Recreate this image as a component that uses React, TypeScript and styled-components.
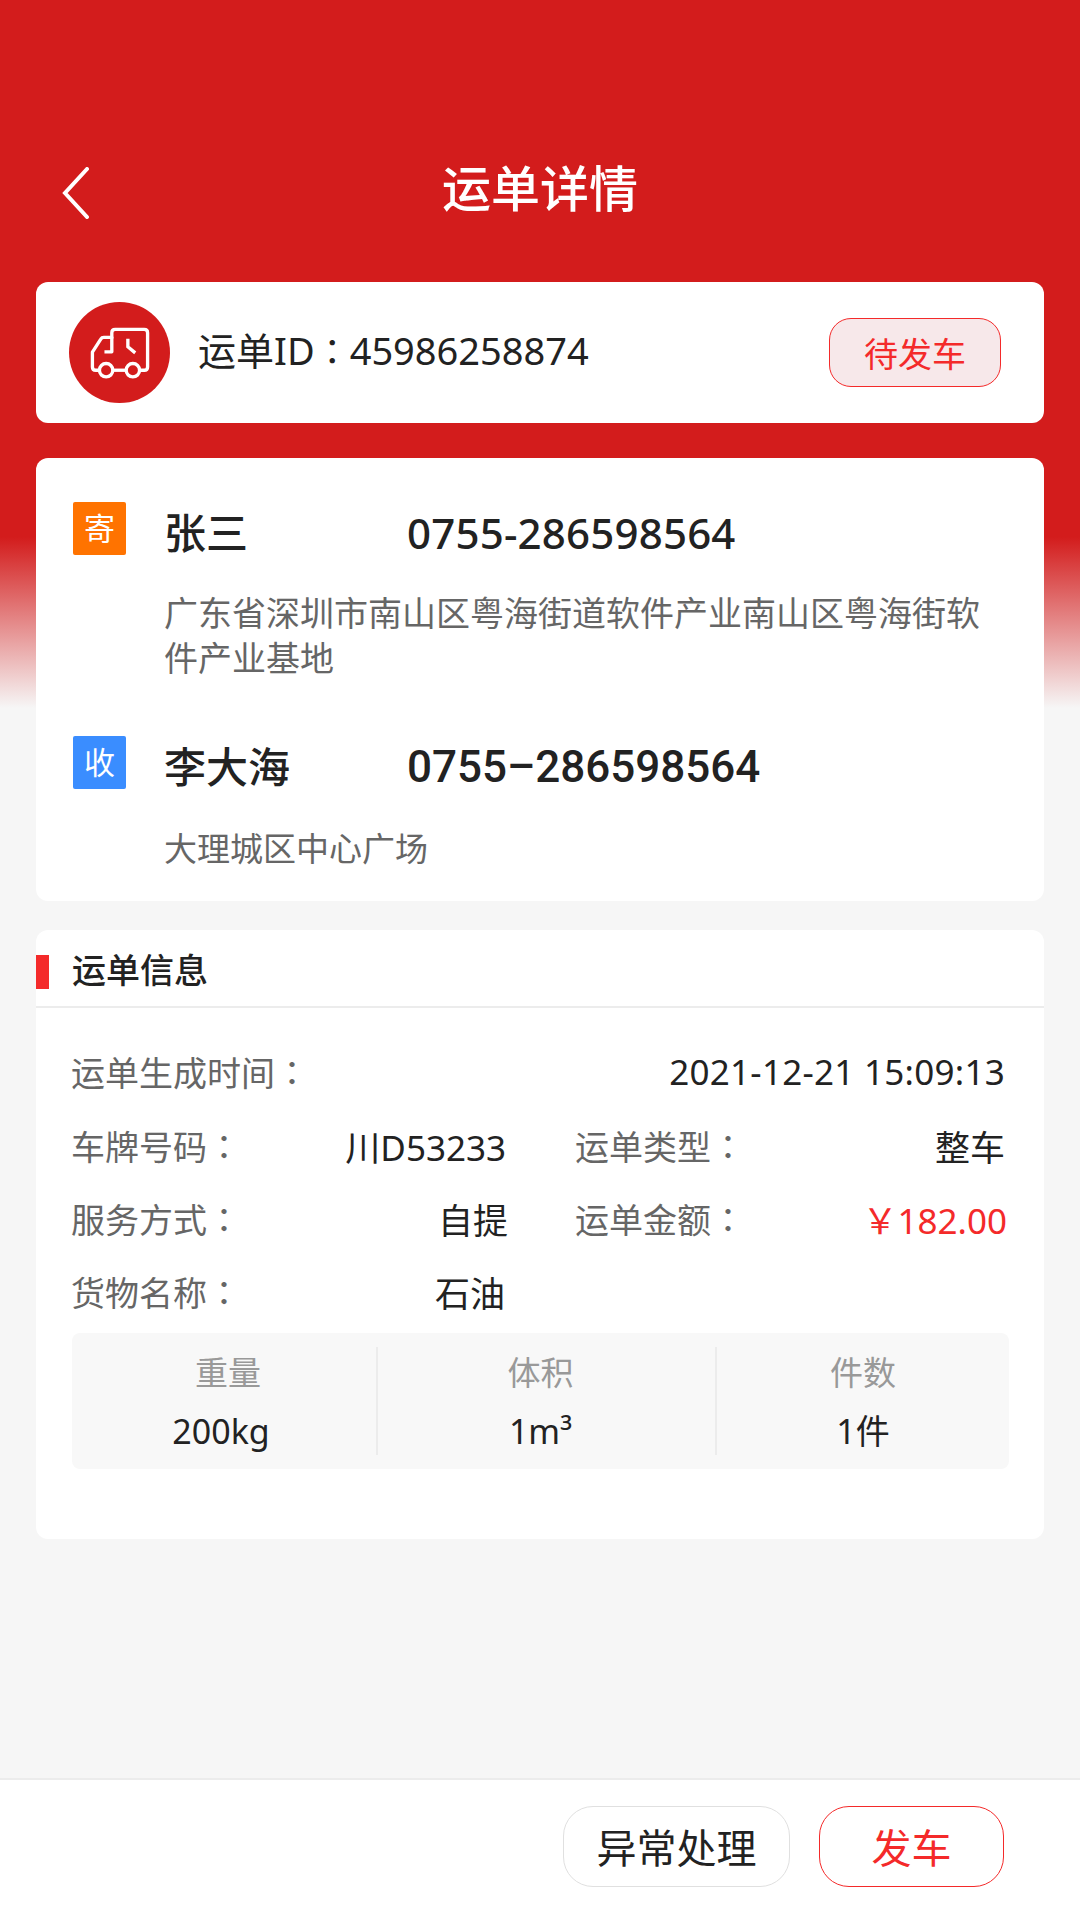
import React from "react";
import styled, { createGlobalStyle } from "styled-components";

const RED = "#d31c1c";
const ACCENT = "#f42a2a";

const GlobalStyle = createGlobalStyle`
  html, body {
    margin: 0;
    padding: 0;
    background: #f6f6f6;
    font-family: "Noto Sans", "Noto Sans CJK SC", sans-serif;
  }
  * {
    box-sizing: border-box;
  }
`;

const Page = styled.div`
  width: 1080px;
  height: 1920px;
  display: flex;
  flex-direction: column;
  background-color: #f6f6f6;
  background-image: linear-gradient(${RED} 0, ${RED} 537px, #f6f6f6 708px);
  background-size: 100% 708px;
  background-repeat: no-repeat;
`;

const NavBar = styled.div`
  display: grid;
  grid-template-columns: 1fr auto 1fr;
  align-items: center;
  height: 120px;
  margin-top: 130px;
  margin-bottom: 32px;
  color: #fff;
`;

const BackIcon = styled.svg`
  display: block;
  margin: 6px 0 0 62px;
`;

const Title = styled.div`
  margin-top: -5px;
  font-size: 49px;
  font-weight: 500;
  line-height: 60px;
`;

const Card = styled.div<{ $h: number; $mb: number }>`
  margin: 0 36px ${(p) => p.$mb}px;
  height: ${(p) => p.$h}px;
  background: #fff;
  border-radius: 12px;
`;

const OrderRow = styled(Card)`
  display: flex;
  align-items: center;
  padding: 0 43px 0 33px;
`;

const Avatar = styled.div`
  width: 101px;
  height: 101px;
  border-radius: 50%;
  background: ${RED};
  flex-shrink: 0;
`;

const OrderId = styled.div`
  flex: 1;
  margin: -5px 0 0 28px;
  font-size: 38px;
  line-height: 48px;
  color: #222;
`;

const Colon = styled.span`
  font-family: "Noto Sans CJK TC", sans-serif;
`;

const OrderColon = styled(Colon)`
  font-size: 35px;
`;

const StatusBadge = styled.div`
  width: 172px;
  height: 69px;
  display: flex;
  align-items: center;
  justify-content: center;
  background: #f7e8ea;
  border: 1px solid ${ACCENT};
  border-radius: 22px;
  font-size: 34px;
  color: ${ACCENT};
`;

const Contacts = styled(Card)`
  padding: 44px 36px 0 37px;
`;

const ContactHead = styled.div<{ $mt?: number }>`
  display: flex;
  align-items: flex-start;
  margin-top: ${(p) => p.$mt ?? 0}px;
`;

const Tag = styled.div<{ $color: string }>`
  width: 53px;
  height: 53px;
  flex-shrink: 0;
  display: flex;
  align-items: center;
  justify-content: center;
  padding-bottom: 4px;
  background: ${(p) => p.$color};
  border-radius: 2px;
  font-size: 31px;
  color: #fff;
`;

const ContactName = styled.div`
  width: 243px;
  margin: 2px 0 0 38px;
  font-size: 42px;
  font-weight: 500;
  line-height: 58px;
  color: #222;
`;

const Phone = styled.div<{ $alt?: boolean }>`
  margin-top: 2px;
  font-family: ${(p) => (p.$alt ? `"Roboto"` : `"Noto Sans"`)}, sans-serif;
  font-size: ${(p) => (p.$alt ? 44 : 42)}px;
  font-weight: 500;
  line-height: 58px;
  letter-spacing: ${(p) => (p.$alt ? 0 : 0.2)}px;
  color: #222;
`;

const Address = styled.div<{ $mt: number; $size: number }>`
  margin: ${(p) => p.$mt}px 0 0 91px;
  width: 830px;
  font-size: ${(p) => p.$size}px;
  line-height: 45px;
  color: #666;
`;

const InfoCard = styled(Card)`
  padding-top: 25px;
`;

const SectionHead = styled.div`
  display: flex;
  align-items: center;
  height: 51px;
  border-bottom: 2px solid #ececec;
  box-sizing: content-box;
`;

const AccentBar = styled.div`
  width: 13px;
  height: 34px;
  margin-top: -17px;
  background: ${ACCENT};
`;

const SectionTitle = styled.div`
  margin: -22px 0 0 23px;
  font-size: 34px;
  font-weight: 500;
  line-height: 40px;
  color: #222;
`;

const InfoGrid = styled.div`
  display: grid;
  grid-template-columns: 434px 430px;
  column-gap: 70px;
  grid-auto-rows: 73.4px;
  margin: 27px 0 0 35px;
`;

const Field = styled.div<{ $wide?: boolean }>`
  ${(p) => (p.$wide ? "grid-column: 1 / -1;" : "")}
  display: flex;
  justify-content: space-between;
  align-items: center;
`;

const FieldLabel = styled.span`
  font-size: 34px;
  color: #666;
`;

const FieldValue = styled.span<{ $red?: boolean; $shift?: number; $spread?: number }>`
  margin-right: ${(p) => -(p.$shift ?? 0)}px;
  letter-spacing: ${(p) => p.$spread ?? 0}px;
  font-size: 35px;
  color: ${(p) => (p.$red ? ACCENT : "#222")};
`;

const Stats = styled.div`
  display: flex;
  align-items: center;
  height: 136px;
  margin: 4px 35px 0 36px;
  background: #f8f8f8;
  border-radius: 8px;
`;

const StatCell = styled.div<{ $w: number; $pr?: number; $line?: boolean }>`
  width: ${(p) => p.$w}px;
  height: 108px;
  padding-right: ${(p) => p.$pr ?? 0}px;
  display: flex;
  flex-direction: column;
  align-items: center;
  border-right: ${(p) => (p.$line ? "2px solid #ececec" : "none")};
`;

const StatLabel = styled.div<{ $ml?: number }>`
  margin: 1px 0 0 ${(p) => p.$ml ?? 0}px;
  font-size: 33px;
  line-height: 50px;
  color: #999;
`;

const StatValue = styled.div<{ $ml?: number }>`
  margin: 8px 0 0 ${(p) => p.$ml ?? 0}px;
  font-size: 34px;
  line-height: 50px;
  color: #222;
`;

const Footer = styled.div`
  margin-top: auto;
  height: 142px;
  display: flex;
  justify-content: flex-end;
  gap: 29px;
  padding: 26px 76px 0 0;
  background: #fff;
  border-top: 2px solid #ececec;
`;

const ActionButton = styled.div<{ $primary?: boolean }>`
  width: ${(p) => (p.$primary ? 185 : 227)}px;
  height: 81px;
  display: flex;
  align-items: center;
  justify-content: center;
  padding-bottom: 2px;
  border: 1px solid ${(p) => (p.$primary ? ACCENT : "#e0e0e0")};
  border-radius: 30px;
  font-size: 40px;
  color: ${(p) => (p.$primary ? ACCENT : "#222")};
`;

const TruckIcon = () => (
  <svg width="101" height="101" viewBox="87 36 302 302" fill="none" stroke="#fff" strokeWidth="10">
    <path d="M215 145V128Q215 118 225 118H312Q322 118 322 128V230Q322 240 312 240H300" strokeLinejoin="round" />
    <path d="M176 240H167Q157 240 157 230V186L182 147Q185 142 191 142H215V185H193" strokeLinejoin="round" />
    <path d="M219 240H257" />
    <circle cx="198" cy="240" r="20" />
    <circle cx="278" cy="240" r="20" />
    <path d="M263 146V170L285 188" />
  </svg>
);

export default function App() {
  return (
    <Page>
      <GlobalStyle />
      <NavBar>
        <BackIcon width="27" height="52" viewBox="0 0 27 52" fill="none" stroke="#fff" strokeWidth="4" strokeLinecap="round">
          <path d="M25 2L3 26L25 50" />
        </BackIcon>
        <Title>运单详情</Title>
        <div />
      </NavBar>

      <OrderRow $h={141} $mb={35}>
        <Avatar>
          <TruckIcon />
        </Avatar>
        <OrderId>
          运单ID<OrderColon>：</OrderColon>45986258874
        </OrderId>
        <StatusBadge>待发车</StatusBadge>
      </OrderRow>

      <Contacts $h={443} $mb={29}>
        <ContactHead>
          <Tag $color="#ff7300">寄</Tag>
          <ContactName>张三</ContactName>
          <Phone>0755-286598564</Phone>
        </ContactHead>
        <Address $mt={29} $size={34}>
          广东省深圳市南山区粤海街道软件产业南山区粤海街软件产业基地
        </Address>
        <ContactHead $mt={55}>
          <Tag $color="#3a8dff">收</Tag>
          <ContactName>李大海</ContactName>
          <Phone $alt>0755–286598564</Phone>
        </ContactHead>
        <Address $mt={30} $size={33}>
          大理城区中心广场
        </Address>
      </Contacts>

      <InfoCard $h={609} $mb={0}>
        <SectionHead>
          <AccentBar />
          <SectionTitle>运单信息</SectionTitle>
        </SectionHead>
        <InfoGrid>
          <Field $wide>
            <FieldLabel>运单生成时间<Colon>：</Colon></FieldLabel>
            <FieldValue $spread={0.27}>2021-12-21 15:09:13</FieldValue>
          </Field>
          <Field>
            <FieldLabel>车牌号码<Colon>：</Colon></FieldLabel>
            <FieldValue $shift={1}>川D53233</FieldValue>
          </Field>
          <Field>
            <FieldLabel>运单类型<Colon>：</Colon></FieldLabel>
            <FieldValue>整车</FieldValue>
          </Field>
          <Field>
            <FieldLabel>服务方式<Colon>：</Colon></FieldLabel>
            <FieldValue $shift={3}>自提</FieldValue>
          </Field>
          <Field>
            <FieldLabel>运单金额<Colon>：</Colon></FieldLabel>
            <FieldValue $red $shift={2}>￥182.00</FieldValue>
          </Field>
          <Field>
            <FieldLabel>货物名称<Colon>：</Colon></FieldLabel>
            <FieldValue>石油</FieldValue>
          </Field>
        </InfoGrid>
        <Stats>
          <StatCell $w={306} $line>
            <StatLabel $ml={8}>重量</StatLabel>
            <StatValue $ml={-6}>200kg</StatValue>
          </StatCell>
          <StatCell $w={339} $pr={12} $line>
            <StatLabel>体积</StatLabel>
            <StatValue>1m³</StatValue>
          </StatCell>
          <StatCell $w={292}>
            <StatLabel>件数</StatLabel>
            <StatValue>1件</StatValue>
          </StatCell>
        </Stats>
      </InfoCard>

      <Footer>
        <ActionButton>异常处理</ActionButton>
        <ActionButton $primary>发车</ActionButton>
      </Footer>
    </Page>
  );
}
